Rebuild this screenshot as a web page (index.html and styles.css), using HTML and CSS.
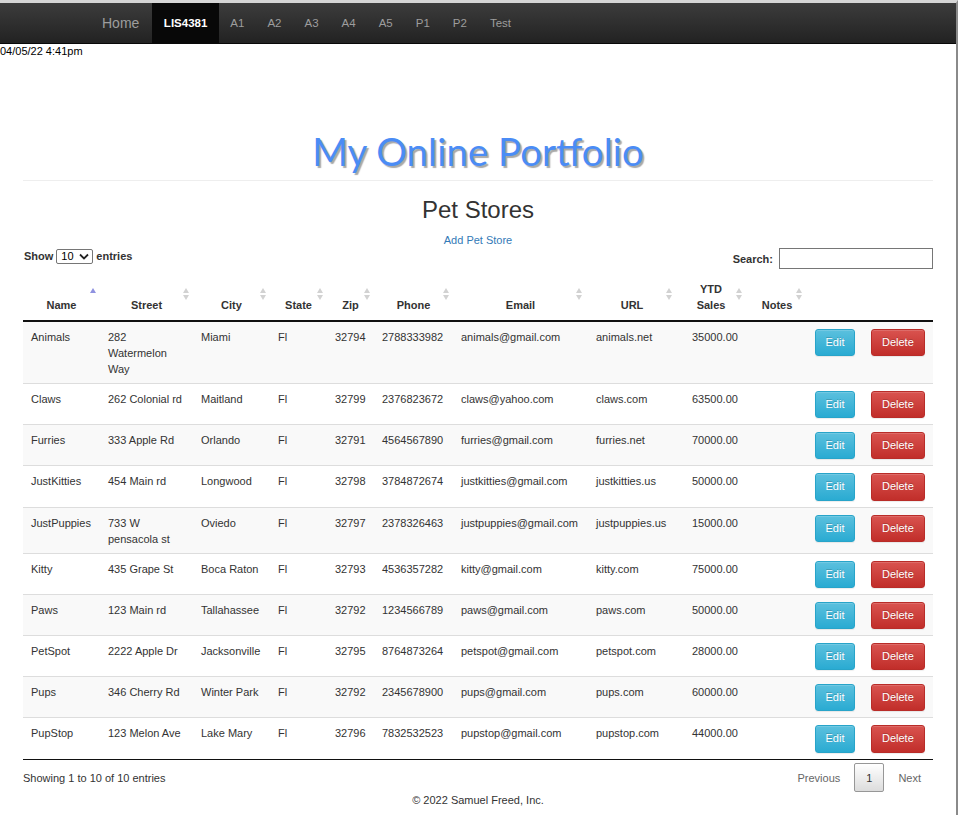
FILE: index.html
```html
<!DOCTYPE html>
<html lang="en">
<head>
<meta charset="utf-8">
<title>LIS4381 - Pet Stores</title>
<link rel="stylesheet" href="styles.css">
</head>
<body>
<div class="page">
  <nav class="navbar">
    <a class="brand" href="#">Home</a>
    <ul class="nav">
      <li class="active"><a href="#">LIS4381</a></li>
      <li><a href="#">A1</a></li>
      <li><a href="#">A2</a></li>
      <li><a href="#">A3</a></li>
      <li><a href="#">A4</a></li>
      <li><a href="#">A5</a></li>
      <li><a href="#">P1</a></li>
      <li><a href="#">P2</a></li>
      <li><a href="#">Test</a></li>
    </ul>
  </nav>
  <div class="date">04/05/22 4:41pm</div>

  <div class="container">
    <div class="page-header">
      <h1 class="portfolio-title">My Online Portfolio</h1>
    </div>
    <h2 class="section-title">Pet Stores</h2>
    <p class="add-link"><a href="#">Add Pet Store</a></p>

    <div class="dt-top">
      <label class="dt-length">Show
        <span class="select">10 <svg width="10" height="7" viewBox="0 0 10 7"><path d="M1 1.5 L5 5.5 L9 1.5" fill="none" stroke="#222" stroke-width="1.8"/></svg></span>
        entries</label>
      <label class="dt-filter">Search: <span class="search-input"></span></label>
    </div>

    <table class="data-table">
      <colgroup>
        <col class="c-name"><col class="c-street"><col class="c-city"><col class="c-state"><col class="c-zip"><col class="c-phone"><col class="c-email"><col class="c-url"><col class="c-ytd"><col class="c-notes"><col class="c-edit"><col class="c-delete">
      </colgroup>
      <thead>
        <tr>
          <th>Name<span class="sort asc"></span></th>
          <th>Street<span class="sort both"></span></th>
          <th>City<span class="sort both"></span></th>
          <th>State<span class="sort both"></span></th>
          <th>Zip<span class="sort both"></span></th>
          <th>Phone<span class="sort both"></span></th>
          <th class="h-email">Email<span class="sort both"></span></th>
          <th class="h-url">URL<span class="sort both"></span></th>
          <th class="h-ytd">YTD<br>Sales<span class="sort both"></span></th>
          <th class="h-notes">Notes<span class="sort both"></span></th>
          <th></th>
          <th></th>
        </tr>
      </thead>
      <tbody>
        <tr class="odd"><td>Animals</td><td>282<br>Watermelon<br>Way</td><td>Miami</td><td>Fl</td><td>32794</td><td>2788333982</td><td>animals@gmail.com</td><td>animals.net</td><td>35000.00</td><td></td><td><a class="btn btn-edit" href="#">Edit</a></td><td><a class="btn btn-delete" href="#">Delete</a></td></tr>
        <tr><td>Claws</td><td>262 Colonial rd</td><td>Maitland</td><td>Fl</td><td>32799</td><td>2376823672</td><td>claws@yahoo.com</td><td>claws.com</td><td>63500.00</td><td></td><td><a class="btn btn-edit" href="#">Edit</a></td><td><a class="btn btn-delete" href="#">Delete</a></td></tr>
        <tr class="odd"><td>Furries</td><td>333 Apple Rd</td><td>Orlando</td><td>Fl</td><td>32791</td><td>4564567890</td><td>furries@gmail.com</td><td>furries.net</td><td>70000.00</td><td></td><td><a class="btn btn-edit" href="#">Edit</a></td><td><a class="btn btn-delete" href="#">Delete</a></td></tr>
        <tr><td>JustKitties</td><td>454 Main rd</td><td>Longwood</td><td>Fl</td><td>32798</td><td>3784872674</td><td>justkitties@gmail.com</td><td>justkitties.us</td><td>50000.00</td><td></td><td><a class="btn btn-edit" href="#">Edit</a></td><td><a class="btn btn-delete" href="#">Delete</a></td></tr>
        <tr class="odd"><td>JustPuppies</td><td>733 W<br>pensacola st</td><td>Oviedo</td><td>Fl</td><td>32797</td><td>2378326463</td><td>justpuppies@gmail.com</td><td>justpuppies.us</td><td>15000.00</td><td></td><td><a class="btn btn-edit" href="#">Edit</a></td><td><a class="btn btn-delete" href="#">Delete</a></td></tr>
        <tr><td>Kitty</td><td>435 Grape St</td><td>Boca Raton</td><td>Fl</td><td>32793</td><td>4536357282</td><td>kitty@gmail.com</td><td>kitty.com</td><td>75000.00</td><td></td><td><a class="btn btn-edit" href="#">Edit</a></td><td><a class="btn btn-delete" href="#">Delete</a></td></tr>
        <tr class="odd"><td>Paws</td><td>123 Main rd</td><td>Tallahassee</td><td>Fl</td><td>32792</td><td>1234566789</td><td>paws@gmail.com</td><td>paws.com</td><td>50000.00</td><td></td><td><a class="btn btn-edit" href="#">Edit</a></td><td><a class="btn btn-delete" href="#">Delete</a></td></tr>
        <tr><td>PetSpot</td><td>2222 Apple Dr</td><td>Jacksonville</td><td>Fl</td><td>32795</td><td>8764873264</td><td>petspot@gmail.com</td><td>petspot.com</td><td>28000.00</td><td></td><td><a class="btn btn-edit" href="#">Edit</a></td><td><a class="btn btn-delete" href="#">Delete</a></td></tr>
        <tr class="odd"><td>Pups</td><td>346 Cherry Rd</td><td>Winter Park</td><td>Fl</td><td>32792</td><td>2345678900</td><td>pups@gmail.com</td><td>pups.com</td><td>60000.00</td><td></td><td><a class="btn btn-edit" href="#">Edit</a></td><td><a class="btn btn-delete" href="#">Delete</a></td></tr>
        <tr><td>PupStop</td><td>123 Melon Ave</td><td>Lake Mary</td><td>Fl</td><td>32796</td><td>7832532523</td><td>pupstop@gmail.com</td><td>pupstop.com</td><td>44000.00</td><td></td><td><a class="btn btn-edit" href="#">Edit</a></td><td><a class="btn btn-delete" href="#">Delete</a></td></tr>
      </tbody>
    </table>

    <div class="dt-bottom">
      <div class="dt-info">Showing 1 to 10 of 10 entries</div>
      <div class="dt-paginate">
        <span class="page-btn disabled">Previous</span>
        <span class="page-btn current">1</span>
        <span class="page-btn disabled">Next</span>
      </div>
    </div>

    <footer class="footer">© 2022 Samuel Freed, Inc.</footer>
  </div>
</div>
</body>
</html>
```

FILE: styles.css
```css
* { box-sizing: border-box; }

html, body {
  margin: 0;
  padding: 0;
  background: #fff;
}

body {
  font-family: "Liberation Sans", Arial, sans-serif;
  font-size: 11px;
  line-height: 16px;
  color: #333;
}

.page {
  width: 958px;
  min-height: 815px;
  border-top: 3px solid #d6d6d6;
  border-right: 2px solid #8a8a8a;
}

a { color: #337ab7; text-decoration: none; }

/* navbar */
.navbar {
  display: flex;
  align-items: stretch;
  height: 41px;
  padding-left: 90px;
  background: linear-gradient(to bottom, #3c3c3c 0%, #222 100%);
  border-bottom: 1px solid #080808;
}

.brand {
  padding: 0 13px 0 12px;
  line-height: 40px;
  font-size: 14px;
  color: #9d9d9d;
}

.nav {
  display: flex;
  margin: 0;
  padding: 0;
  list-style: none;
}

.nav li a {
  display: block;
  padding: 0 11.5px;
  line-height: 40px;
  font-size: 11.5px;
  color: #9d9d9d;
}

.nav li.active a {
  background: #080808;
  color: #fff;
  font-weight: bold;
}

.date {
  font-size: 11px;
  line-height: 14px;
  color: #000;
}

/* content */
.container {
  width: 910px;
  margin: 0 auto;
}

.page-header {
  margin-top: 72px;
  padding-bottom: 8px;
  border-bottom: 1px solid #eee;
}

.portfolio-title {
  margin: 0;
  text-align: center;
  font-family: "Lato", "DejaVu Sans", sans-serif;
  font-weight: normal;
  font-size: 38.5px;
  line-height: 42px;
  color: #4b8cf5;
  text-shadow: 2px 2px 1px #a8a8a8;
}

.section-title {
  margin: 16px 0 0;
  text-align: center;
  font-weight: normal;
  font-size: 24px;
  line-height: 26px;
  color: #333;
}

.add-link {
  margin: 9px 0 0;
  text-align: center;
  font-size: 11px;
  line-height: 16px;
}

.dt-top {
  display: flex;
  justify-content: space-between;
  align-items: center;
  height: 21px;
  font-weight: bold;
}

.dt-length {
  display: flex;
  align-items: center;
  gap: 3px;
  padding-left: 1px;
  margin-top: -5px;
}

.select {
  display: inline-flex;
  align-items: center;
  justify-content: space-between;
  width: 37px;
  height: 15px;
  padding: 0 3px 0 4px;
  border: 1px solid #767676;
  border-radius: 2px;
  font-weight: normal;
  font-size: 11px;
  color: #000;
}

.dt-filter {
  display: flex;
  align-items: center;
  gap: 6px;
}

.dt-filter .search-input { margin-top: 0; }

.search-input {
  display: block;
  width: 154px;
  height: 21px;
  border: 1px solid #767676;
  background: #fff;
}

/* table */
.data-table {
  width: 910px;
  margin-top: 4px;
  table-layout: fixed;
  border-collapse: separate;
  border-spacing: 0;
  border-bottom: 1px solid #111;
}

.c-name { width: 77px; }
.c-street { width: 93px; }
.c-city { width: 77px; }
.c-state { width: 57px; }
.c-zip { width: 47px; }
.c-phone { width: 79px; }
.c-email { width: 135px; }
.c-url { width: 96px; }
.c-ytd { width: 68px; }
.c-notes { width: 54px; }
.c-edit { width: 56px; }
.c-delete { width: 71px; }

.data-table th {
  position: relative;
  padding: 8px 8px 7px;
  vertical-align: bottom;
  text-align: center;
  font-weight: bold;
  color: #333;
  border-bottom: 2px solid #111;
}

.data-table th.h-url { padding-right: 16px; }
.data-table th.h-ytd { padding-right: 22px; }
.data-table th.h-notes { padding-right: 12px; }

.sort {
  position: absolute;
  right: 4px;
  bottom: 20px;
  width: 6px;
  height: 12px;
}

.h-email .sort { right: 6px; }
.h-url .sort { right: 12px; }
.h-ytd .sort { right: 10px; }

.sort::before,
.sort::after {
  content: "";
  position: absolute;
  left: 0;
  width: 0;
  height: 0;
  border-left: 3px solid transparent;
  border-right: 3px solid transparent;
}

.sort.both::before {
  top: 0;
  border-bottom: 5px solid #d2d2d2;
}

.sort.both::after {
  bottom: 0;
  border-top: 5px solid #d2d2d2;
}

.sort.asc::before {
  top: 0;
  border-bottom: 5px solid #8f92e0;
}

.data-table td {
  padding: 7px 8px 6px;
  vertical-align: top;
  white-space: nowrap;
  border-top: 1px solid #ddd;
}

.data-table tbody tr:first-child td { border-top: 0; }

.data-table tr.odd td { background: #f9f9f9; }

.btn {
  display: inline-block;
  margin-left: 1px;
  padding: 5px 10px;
  font-size: 11px;
  line-height: 15.2px;
  color: #fff;
  border: 1px solid transparent;
  border-radius: 3px;
  text-shadow: 0 -1px 0 rgba(0, 0, 0, .2);
  box-shadow: inset 0 1px 0 rgba(255, 255, 255, .15), 0 1px 1px rgba(0, 0, 0, .075);
}

.btn-edit {
  padding: 5px 9.5px;
  background: linear-gradient(to bottom, #5bc0de 0%, #2aabd2 100%);
  border-color: #28a4c9;
}

.btn-delete {
  background: linear-gradient(to bottom, #d9534f 0%, #c12e2a 100%);
  border-color: #b92c28;
}

.dt-bottom {
  display: flex;
  justify-content: space-between;
  align-items: flex-start;
}

.dt-info {
  padding-top: 10px;
  color: #333;
}

.dt-paginate {
  display: flex;
  gap: 2px;
  padding-top: 3px;
}

.page-btn {
  display: block;
  min-width: 16px;
  padding: 6px 11px 5px;
  line-height: 16px;
  text-align: center;
  border: 1px solid transparent;
  border-radius: 2px;
  color: #666;
}

.page-btn.current {
  color: #333;
  border-color: #979797;
  background: linear-gradient(to bottom, #fff 0%, #dcdcdc 100%);
}

.footer {
  text-align: center;
  line-height: 16px;
  color: #333;
}
```
